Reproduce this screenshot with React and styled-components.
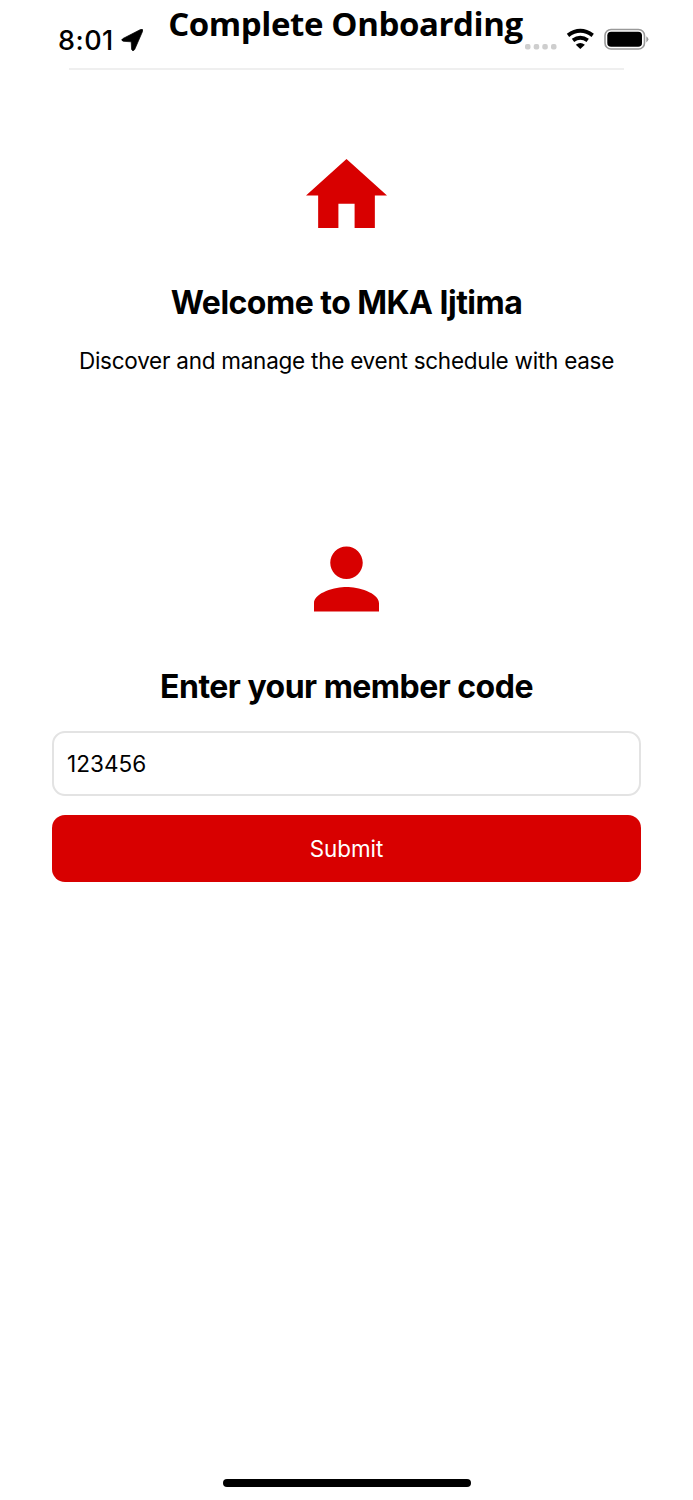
import React from 'react';
import styled, { createGlobalStyle } from 'styled-components';

const GlobalStyle = createGlobalStyle`
  * { box-sizing: border-box; }
  body { margin: 0; background: #fff; color: #000; font-family: Inter, "Liberation Sans", sans-serif; }
`;
const Screen = styled.main`
  width: 693px; height: 1500px; display: flex; flex-direction: column; align-items: center; overflow: hidden;
`;
const Header = styled.header`
  width: 100%; height: 70px; flex: none; display: flex; flex-direction: column; align-items: center; justify-content: space-between;
`;
const StatusBar = styled.div`
  width: 100%; height: 60px; display: grid; grid-template-columns: 168px 357px 1fr;
`;
const Clock = styled.div`
  display: flex; align-items: center; padding: 20px 0 0 58px; gap: 7px; height: 60px;
  font-size: 27px; font-weight: 500; white-space: nowrap;
`;
const Time = styled.span`letter-spacing: 0.5px;`;
const PageTitle = styled.h1`
  margin: 0; padding-right: 2px; text-align: center; white-space: nowrap;
  font: 700 33px/47px "Open Sans", sans-serif; letter-spacing: -0.4px;
`;
const Indicators = styled.div`
  display: flex; align-items: center; height: 60px; padding-top: 20px;
`;
const Icon = styled.svg`display: block; flex: none;`;
const Divider = styled.div`width: 555px; height: 2px; background: #efefef;`;
const Section = styled.section`
  width: 589px; display: flex; flex-direction: column; align-items: center; margin-top: ${p => p.$top}px;
`;
const Heading = styled.h2`
  margin: ${p => p.$top}px 0 0; font-size: 32px; line-height: 40px; font-weight: 700; letter-spacing: -0.52px; white-space: nowrap;
`;
const Description = styled.p`
  margin: 22px 0 0; font-size: 22.5px; line-height: 32px; letter-spacing: -0.25px; white-space: nowrap;
`;
const CodeInput = styled.input`
  width: 100%; height: 65px; margin-top: 24px; padding: 0 13px; border: 2px solid #e3e3e3; border-radius: 13px;
  font: 400 22.6px Inter, sans-serif; color: #000; outline: none; background: #fff;
`;
const SubmitButton = styled.button`
  width: 100%; height: 67px; margin-top: 19px; padding: 1px 0 0; border: 0; border-radius: 13px; background: #d80000; color: #fff;
  font: 400 22.4px Inter, sans-serif; letter-spacing: 0;
`;
const HomeIndicator = styled.div`
  width: 248px; height: 8px; border-radius: 4px; background: #000; margin: auto 0 13.5px;
`;

export default function App() {
  return <><GlobalStyle /><Screen>
    <Header>
      <StatusBar>
        <Clock><Time>8:01</Time>
          <Icon width="23" height="23" viewBox="120.5 28.5 23 23"><path d="M122.5 38L140 29Q143 28 142 31L134.2 49Q132.3 51.5 131.1 49L130.7 41.3L122.8 40.8Q119.7 39.7 122.5 38Z" stroke="#000" strokeWidth="0.7" /></Icon>
        </Clock>
        <PageTitle>Complete Onboarding</PageTitle>
        <Indicators>
          <Icon width="124" height="24" viewBox="525 28 124 24">
            <g fill="#cecece"><rect x="525" y="44" width="5.5" height="5.5" rx="2"/><rect x="533.7" y="44" width="5.5" height="5.5" rx="2"/><rect x="542.3" y="44" width="5.5" height="5.5" rx="2"/><rect x="551" y="44" width="5.5" height="5.5" rx="2"/></g>
            <g fill="none" stroke="#000" strokeWidth="3.9"><path d="M568 35.4Q580.3 26.2 592.7 35.4M573 40.4Q580.3 34.9 587.7 40.4"/></g><path d="M575.8 44.7Q580.3 41.5 584.9 44.7L580.3 49.1Z"/>
            <rect x="605" y="29.5" width="39.5" height="19.5" rx="6" fill="none" stroke="#999" strokeWidth="1.6"/><rect x="607.3" y="31.8" width="34.7" height="15" rx="3.8"/><path d="M646.3 36.2Q650.5 39.3 646.3 42.5Z" fill="#999"/>
          </Icon>
        </Indicators>
      </StatusBar>
      <Divider />
    </Header>
    <Section $top={88.5}>
      <Icon width="81" height="69" viewBox="2 3 20 17" preserveAspectRatio="none" fill="#d80000"><path d="M10 20v-6h4v6h5v-8h3L12 3 2 12h3v8z"/></Icon>
      <Heading $top={55.5}>Welcome to MKA Ijtima</Heading>
      <Description>Discover and manage the event schedule with ease</Description>
    </Section>
    <Section $top={169.4}>
      <Icon width="65" height="65" viewBox="4 3.9 16 16" overflow="visible" fill="#d80000"><path d="M12 12c2.21 0 4-1.79 4-4s-1.79-4-4-4-4 1.79-4 4 1.79 4 4 4zm0 2c-2.67 0-8 1.34-8 4v2h16v-2c0-2.66-5.33-4-8-4z"/></Icon>
      <Heading $top={55.2}>Enter your member code</Heading>
      <CodeInput defaultValue="123456" aria-label="Member code" />
      <SubmitButton>Submit</SubmitButton>
    </Section>
    <HomeIndicator />
  </Screen></>;
}
